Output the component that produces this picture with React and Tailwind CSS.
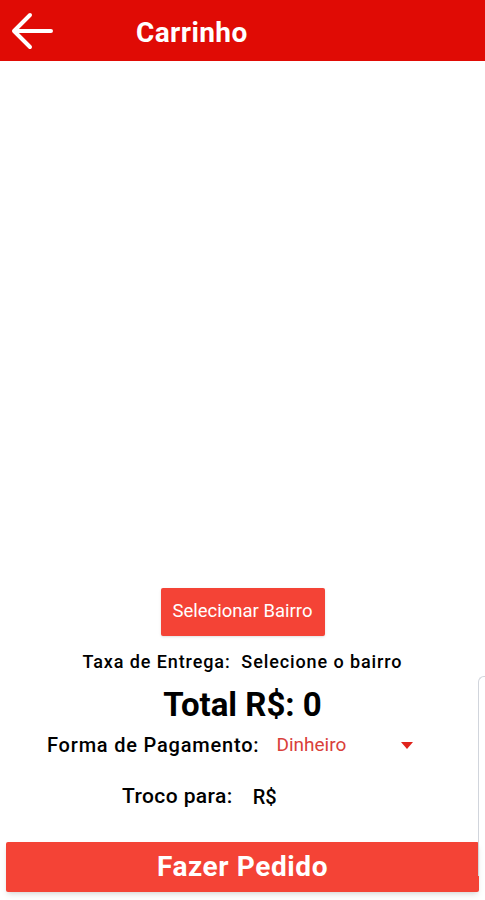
import React from "react";

const App = () => {
  return (
    <div className="relative flex h-[900px] w-full flex-col overflow-hidden bg-white font-['Roboto',sans-serif]">
      {/* header */}
      <div className="flex h-[61px] items-center bg-[#e00b05]">
        <button className="ml-[10px] flex h-[40px] w-[44px] items-center justify-center">
          <svg width="42" height="38" viewBox="0 0 42 38" fill="none">
            <path d="M40 19H4M19 3L3 19l16 16" stroke="white" strokeWidth="4" strokeLinecap="round" strokeLinejoin="round" />
          </svg>
        </button>
        <h1 className="ml-[82px] mt-[4px] text-[28px] font-bold tracking-[0.4px] text-white">Carrinho</h1>
      </div>

      <div className="flex-1" />

      {/* bottom form */}
      <div className="flex flex-col items-center">
        <button className="h-[48px] w-[164px] rounded-[2px] bg-[#f44336] text-[18.5px] text-white shadow-sm">
          Selecionar Bairro
        </button>
        <p className="mt-[14px] h-[24px] text-[18px] font-medium leading-[24px] tracking-[0.9px] text-black">
          Taxa de Entrega:&nbsp; Selecione o bairro
        </p>
        <p className="mt-[12px] h-[38px] text-[33px] font-bold leading-[38px] text-black">Total R$: 0</p>
        <div className="mt-[9px] flex h-[24px] w-full items-center pl-[47px]">
          <span className="text-[20px] font-medium tracking-[0.8px] text-black">Forma de Pagamento:</span>
          <span className="ml-[17px] text-[19px] text-[#d9403a]">Dinheiro</span>
          <svg className="ml-[55px]" width="12" height="7" viewBox="0 0 12 7">
            <path d="M0 0h12L6 7z" fill="#e0231c" />
          </svg>
        </div>
        <div className="mt-[28px] flex h-[24px] w-full items-center pl-[122px]">
          <span className="text-[21px] font-medium tracking-[0.4px] text-black">Troco para:</span>
          <span className="ml-[20px] text-[20px] font-medium text-black">R$</span>
        </div>
      </div>

      <div className="px-[6px] pb-[8px] pt-[33px]">
        <button className="h-[50px] w-full rounded-[2px] bg-[#f44336] text-[28px] font-bold tracking-[0.6px] text-white shadow-md">
          Fazer Pedido
        </button>
      </div>

      {/* faint edge panel on the right */}
      <div className="absolute left-[478px] top-[676px] h-[200px] w-[20px] rounded-tl-[6px] border-l border-t border-gray-300" />
    </div>
  );
};

export default App;
